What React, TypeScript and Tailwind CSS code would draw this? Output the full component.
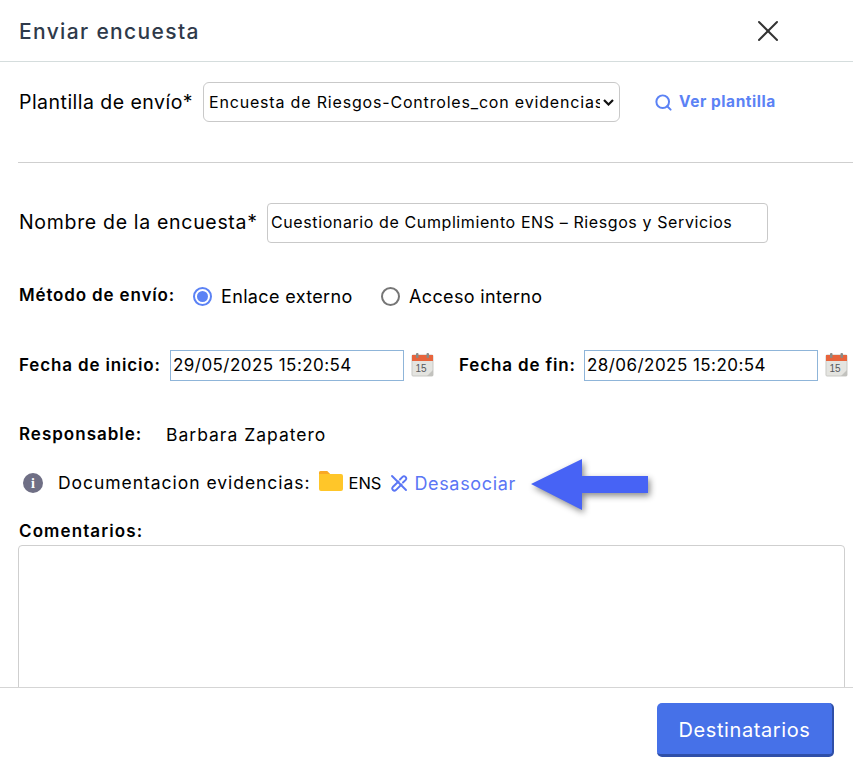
import { Search, X } from 'lucide-react'

function CalendarIcon() {
  return (
    <svg width="23" height="25" viewBox="0 0 23 25" className="shrink-0">
      <rect x="1" y="3" width="21" height="21" rx="1" fill="#e4e4e0" stroke="#c9c9c5" />
      <rect x="1" y="3" width="21" height="6" fill="#e8643c" />
      <rect x="5" y="1" width="2.5" height="5" rx="1" fill="#8a8a86" />
      <rect x="15.5" y="1" width="2.5" height="5" rx="1" fill="#8a8a86" />
      <text x="4.5" y="20" fontSize="10" fontFamily="Liberation Sans, sans-serif" fill="#55585c">15</text>
      <path d="M16 24l6-6v6z" fill="#c2c2be" />
    </svg>
  )
}

function DateField({ label, value, labelClass }: { label: string; value: string; labelClass: string }) {
  return (
    <div className="flex items-center">
      <label className={`font-semibold text-[17px] tracking-[0.85px] text-black ${labelClass}`}>{label}</label>
      <div className="w-[234px] h-[31px] border border-[#8fb5d9] pl-[2px] flex items-center text-[17px] tracking-[0.45px] text-black">
        {value}
      </div>
      <div className="ml-[7px] -mt-[3px]"><CalendarIcon /></div>
    </div>
  )
}

export default function App() {
  return (
    <div className="w-[853px] h-[768px] overflow-hidden bg-white relative font-['Inter','Open_Sans',sans-serif] flex flex-col">
      {/* Header */}
      <div className="h-[62px] shrink-0 border-b border-[#d5dddd] flex items-center justify-between pl-[19px] pr-[67px]">
        <h1 className="pt-[3px] text-[21px] tracking-[1.35px] font-medium text-[#2f3a4a]">Enviar encuesta</h1>
        <X size={36} strokeWidth={1.3} className="text-[#333]" />
      </div>

      <div className="flex-1 min-h-0 overflow-hidden pl-[18px]">
        <div className="h-[101px] border-b border-[#cfcfcf] flex items-start pt-[20px]">
          <label className="text-[19.5px] tracking-[0.47px] text-black leading-[40px] w-[185px] pl-[1px]">Plantilla de envío*</label>
          <div className="w-[417px] h-[40px] border border-[#c9c9c9] rounded-[6px] flex items-center pl-[5px]">
            <span className="w-[391px] shrink-0 overflow-hidden whitespace-nowrap text-[16px] tracking-[0.82px] text-black">Encuesta de Riesgos-Controles_con evidencias</span>
            <svg width="11" height="7" viewBox="0 0 11 7" className="ml-[3px] shrink-0"><path d="M1 1l4.5 4.5L10 1" fill="none" stroke="#111" strokeWidth="2.2" /></svg>
          </div>
          <a className="ml-[34px] h-[40px] flex items-center gap-[6px] text-[15.5px] tracking-[0.55px] font-bold text-[#5b82f5]">
            <Search size={19} strokeWidth={2.5} />
            Ver plantilla
          </a>
        </div>

        <div className="flex items-center mt-[40px] h-[40px]">
          <label className="text-[19.5px] tracking-[0.68px] text-black w-[249px] pl-[1px]">Nombre de la encuesta*</label>
          <div className="w-[501px] h-[40px] border border-[#c9c9c9] rounded-[4px] flex items-center pl-[3px] pb-[2px] text-[16px] tracking-[0.6px] text-black">
            Cuestionario de Cumplimiento ENS – Riesgos y Servicios
          </div>
        </div>

        <div className="flex items-center mt-[40px] h-[26px]">
          <label className="font-semibold text-[17px] tracking-[0.85px] text-black w-[175px] pl-[1px]">Método de envío:</label>
          <span className="w-[19px] h-[19px] rounded-full border-2 border-[#5b82f5] flex items-center justify-center">
            <span className="w-[11px] h-[11px] rounded-full bg-[#5b82f5]" />
          </span>
          <span className="ml-[9px] text-[18px] tracking-[0.35px] text-black w-[160px]">Enlace externo</span>
          <span className="w-[19px] h-[19px] rounded-full border-2 border-[#767676]" />
          <span className="ml-[9px] text-[18px] tracking-[0.35px] text-black">Acceso interno</span>
        </div>

        <div className="flex items-center mt-[41px] h-[31px] gap-[25px]">
          <DateField label="Fecha de inicio:" value="29/05/2025 15:20:54" labelClass="w-[152px] pl-[1px]" />
          <DateField label="Fecha de fin:" value="28/06/2025 15:20:54" labelClass="w-[125px]" />
        </div>

        <div className="flex items-center mt-[41px] h-[26px]">
          <label className="font-semibold text-[17px] tracking-[1px] text-black w-[148px] pl-[1px]">Responsable:</label>
          <span className="text-[17.5px] tracking-[1px] text-black">Barbara Zapatero</span>
        </div>

        <div className="flex items-center mt-[22px] h-[26px]">
          <span className="ml-[5px] w-[20px] h-[20px] rounded-full bg-[#6f6f85] flex items-center justify-center text-white text-[14px] font-bold font-['Liberation_Serif',serif]">i</span>
          <span className="ml-[15px] text-[17.5px] tracking-[0.96px] text-black">Documentacion evidencias:</span>
          <svg width="26" height="21" viewBox="0 0 26 21" className="ml-[7px] -mt-[5px] shrink-0">
            <path d="M1 3a2 2 0 012-2h6l3 3h11a2 2 0 012 2v13a2 2 0 01-2 2H3a2 2 0 01-2-2z" fill="#ffc629" />
            <path d="M1 3a2 2 0 012-2h6l3 3H1z" fill="#f9a825" />
          </svg>
          <span className="ml-[5px] text-[16.5px] text-black">ENS</span>
          <svg width="18" height="18" viewBox="0 0 18 18" fill="none" stroke="#5b76f5" strokeWidth="1.9" strokeLinecap="round" className="ml-[9px] shrink-0">
            <path d="M2 2l14 14" />
            <path d="M8.5 7.5L2.8 13a2.2 2.2 0 003.1 3.1l5.6-5.6" />
            <path d="M10 5.5l2.5-2.6a2.2 2.2 0 013.2 3L13 8.5" />
          </svg>
          <a className="ml-[6px] text-[18px] tracking-[0.65px] text-[#5b76f5]">Desasociar</a>
        </div>

        <label className="block mt-[23px] h-[24px] leading-[24px] font-semibold text-[17px] tracking-[1.1px] text-black pl-[1px]">Comentarios:</label>
        <div className="w-[827px] h-[200px] border border-[#cfcfcf] rounded-[4px] mt-[2px]" />
      </div>

      {/* Footer */}
      <div className="h-[81px] shrink-0 border-t border-[#d5d5d5] flex justify-end items-start pt-[15px] pr-[19px]">
        <button className="w-[177px] h-[54px] pt-[3px] rounded-[5px] bg-[#4671e8] border-r-2 border-b-[3px] border-[#2f4fa8] text-white text-[20px] tracking-[0.6px]">
          Destinatarios
        </button>
      </div>

      {/* Annotation arrow */}
      <svg width="126" height="60" viewBox="0 0 126 60" className="absolute left-[528px] top-[456px] overflow-visible drop-shadow-[2px_3px_3px_rgba(0,0,0,0.45)]">
        <path d="M3 28L54 3v17h66v17H54v17z" fill="#4763f5" />
      </svg>
    </div>
  )
}
